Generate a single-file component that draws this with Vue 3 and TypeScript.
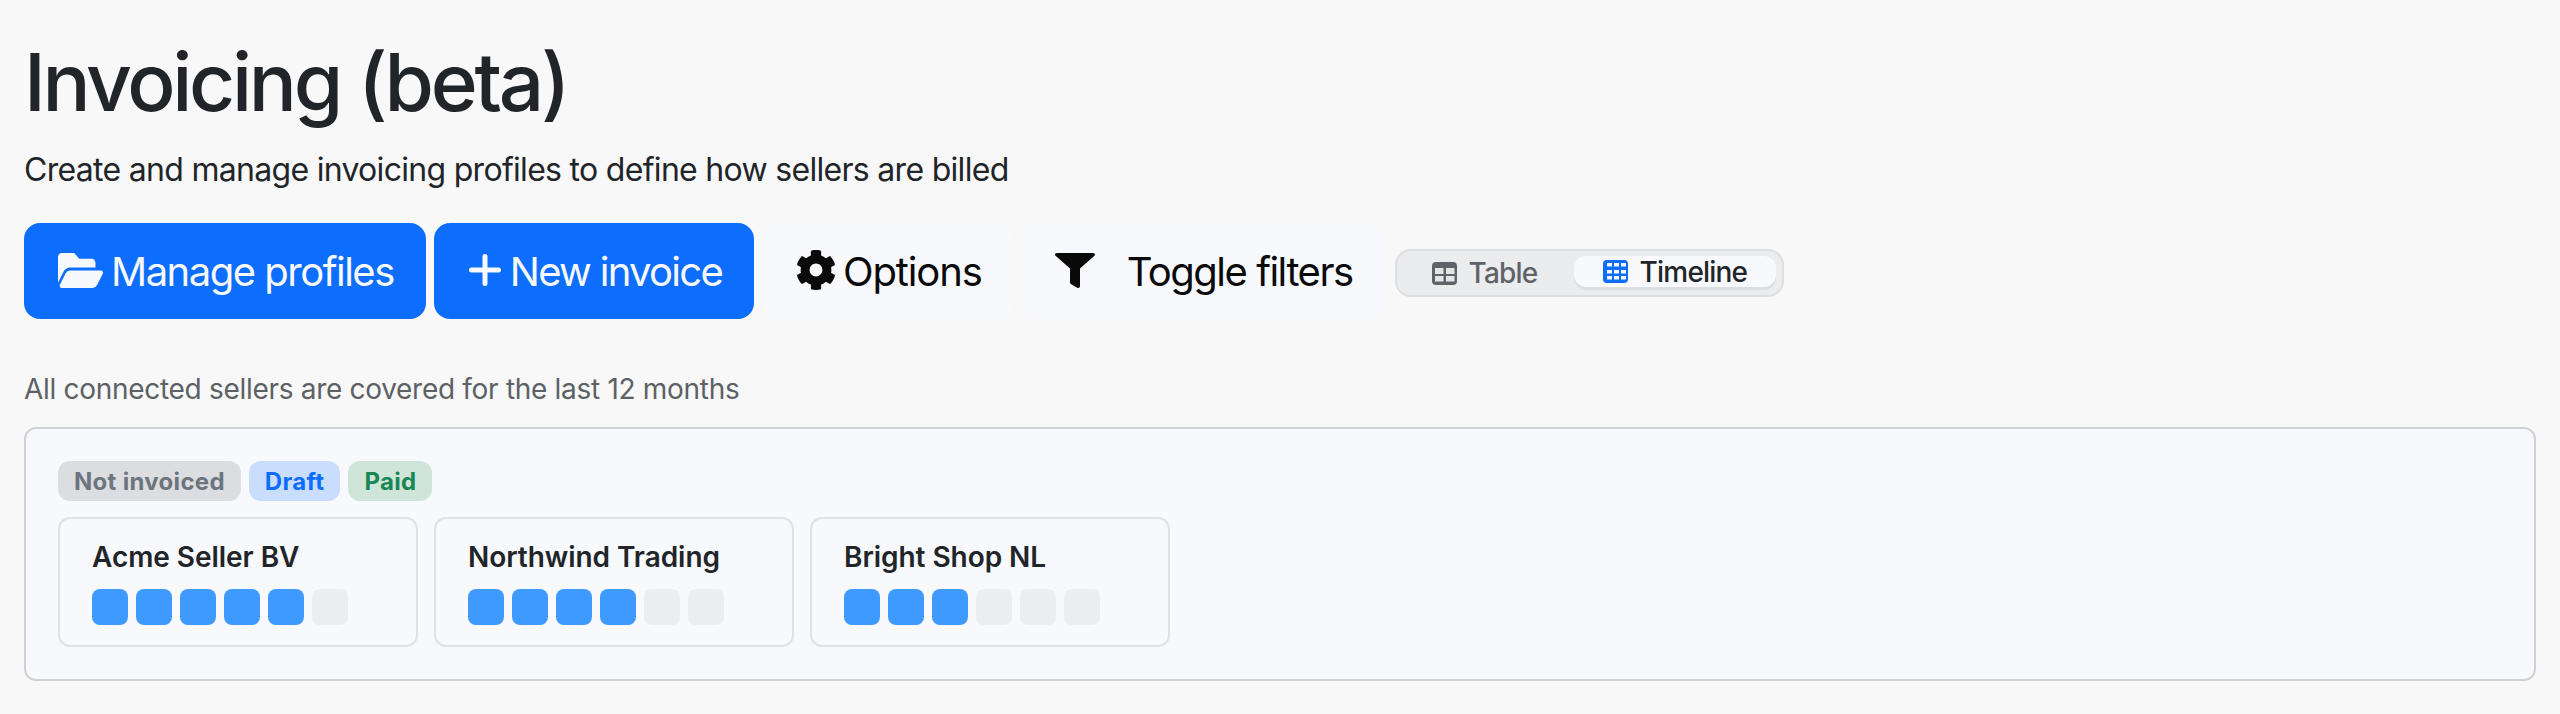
<script setup lang="ts">
interface Seller { name: string; paid: number }
const sellers: Seller[] = [
  { name: 'Acme Seller BV', paid: 5 },
  { name: 'Northwind Trading', paid: 4 },
  { name: 'Bright Shop NL', paid: 3 },
]
const months = [0, 1, 2, 3, 4, 5]
const gridCols = [4, 11, 18]
const gridRows = [3, 10, 16]
</script>

<template>
  <main class="page">
    <h1 class="title">Invoicing (beta)</h1>
    <p class="subtitle">Create and manage invoicing profiles to define how sellers are billed</p>
    <div class="toolbar">
      <button class="btn primary">
        <svg class="ic-folder" viewBox="0 64 576 384" preserveAspectRatio="none" fill="currentColor"><path d="M572.694 292.093L500.27 416.248A63.997 63.997 0 0 1 444.989 448H45.025c-18.523 0-30.064-20.093-20.731-36.093l72.424-124.155A64 64 0 0 1 152 256h399.964c18.523 0 30.064 20.093 20.73 36.093zM152 224h328v-48c0-26.51-21.49-48-48-48H272l-64-64H48C21.49 64 0 85.49 0 112v278.046l69.077-118.418C86.214 242.25 117.989 224 152 224z"/></svg>
        <span>Manage profiles</span>
      </button>
      <button class="btn primary tight">
        <svg class="ic-plus" viewBox="0 0 32 32" fill="none" stroke="currentColor" stroke-width="5" stroke-linecap="round"><path d="M16 2.500v27M2.500 16h27"/></svg>
        <span>New invoice</span>
      </button>
      <button class="btn light options">
        <svg class="ic-gear" viewBox="18 8 476 496" preserveAspectRatio="none" fill="currentColor"><path d="M487.4 315.7l-42.6-24.6c4.3-23.2 4.3-47 0-70.2l42.6-24.6c4.9-2.8 7.1-8.6 5.5-14-11.1-35.6-30-67.8-54.7-94.6-3.8-4.1-10-5.1-14.8-2.3L380.800 110c-17.900-15.400-38.500-27.300-60.800-35.100V25.800c0-5.600-3.900-10.500-9.400-11.700-36.700-8.200-74.300-7.800-109.200 0-5.500 1.200-9.400 6.100-9.400 11.700V75c-22.200 7.900-42.800 19.800-60.800 35.100L88.700 85.500c-4.900-2.800-11-1.900-14.800 2.300-24.700 26.700-43.600 58.900-54.700 94.600-1.700 5.400.6 11.200 5.500 14L67.300 221c-4.300 23.200-4.300 47 0 70.200l-42.600 24.600c-4.900 2.800-7.100 8.600-5.500 14 11.100 35.600 30 67.800 54.700 94.600 3.800 4.100 10 5.100 14.800 2.300l42.600-24.600c17.900 15.400 38.500 27.300 60.800 35.100v49.200c0 5.600 3.900 10.500 9.400 11.700 36.700 8.200 74.300 7.800 109.200 0 5.500-1.200 9.400-6.100 9.400-11.700v-49.200c22.200-7.900 42.800-19.800 60.800-35.100l42.600 24.600c4.900 2.800 11 1.900 14.800-2.300 24.700-26.700 43.600-58.900 54.700-94.600 1.500-5.500-.7-11.300-5.600-14.100zM256 336c-44.100 0-80-35.900-80-80s35.900-80 80-80 80 35.900 80 80-35.900 80-80 80z"/></svg>
        <span>Options</span>
      </button>
      <button class="btn light">
        <svg class="ic-funnel" viewBox="0 0 512 512" preserveAspectRatio="none" fill="currentColor"><path d="M487.976 0H24.028C2.71 0-8.047 25.866 7.058 40.971L192 225.941V432c0 7.831 3.821 15.17 10.237 19.662l80 55.98C298.02 518.69 320 507.493 320 487.98V225.941l184.947-184.97C520.021 25.896 509.338 0 487.976 0z"/></svg>
        <span>Toggle filters</span>
      </button>
      <div class="segment">
        <button class="seg-item">
          <svg class="seg-icon" viewBox="0 0 25 23"><rect width="25" height="23" rx="4" fill="currentColor"/><g fill="#e4e5e7"><rect x="3" y="6" width="8.500" height="6"/><rect x="14" y="6" width="8.500" height="6"/><rect x="3" y="14" width="8.500" height="5.500"/><rect x="14" y="14" width="8.500" height="5.500"/></g></svg>
          <span>Table</span>
        </button>
        <button class="seg-item active">
          <svg class="seg-icon blue" viewBox="0 0 25 23"><rect width="25" height="23" rx="4" fill="currentColor"/><g fill="#f8f9fd"><template v-for="r in gridRows" :key="r"><rect v-for="c in gridCols" :key="c" :x="c" :y="r" width="5" height="3.500"/></template></g></svg>
          <span>Timeline</span>
        </button>
      </div>
    </div>
    <p class="coverage">All connected sellers are covered for the last 12 months</p>
    <section class="panel">
      <div class="legend">
        <span class="badge grey">Not invoiced</span>
        <span class="badge blue">Draft</span>
        <span class="badge green">Paid</span>
      </div>
      <div class="cards">
        <article v-for="seller in sellers" :key="seller.name" class="card">
          <div class="card-title">{{ seller.name }}</div>
          <div class="squares">
            <span v-for="m in months" :key="m" class="square" :class="{ on: m < seller.paid }"></span>
          </div>
        </article>
      </div>
    </section>
  </main>
</template>

<style>
html, body { margin: 0; background: #f8f8f8; }
</style>

<style scoped>
.page {
  box-sizing: border-box;
  height: 714px;
  padding: 38px 24px 0;
  background: #f8f8f8;
  font-family: Inter, "Liberation Sans", sans-serif;
  color: #212529;
}
.title {
  margin: 0;
  font-size: 80px;
  line-height: 88px;
  font-weight: 500;
  letter-spacing: -3.3px;
}
.subtitle {
  margin: 20px 0 0;
  font-size: 32px;
  line-height: 48px;
  letter-spacing: -0.7px;
}
.toolbar {
  margin-top: 29px;
  display: flex;
  align-items: center;
  gap: 8px;
}
.btn {
  height: 96px;
  box-sizing: border-box;
  display: inline-flex;
  align-items: center;
  padding: 0 32px;
  border: 0;
  border-radius: 16px;
  font: inherit;
  font-size: 40px;
  letter-spacing: -1.5px;
}
.btn.tight { letter-spacing: -1.7px; }
.btn.options { letter-spacing: -1.15px; }
.primary { background: #0d6efd; color: #f8f9fd; }
.light { background: #f8f9fd; color: #0a0a0a; }
.ic-folder { width: 45px; height: 35px; margin: 0 8px 2px 2px; flex: none; }
.ic-plus { width: 32px; height: 32px; margin: 0 9px 2px 3px; flex: none; }
.ic-gear { width: 38px; height: 40px; margin: 0 8px 2px 3px; flex: none; }
.ic-funnel { width: 40px; height: 35px; margin: 0 32px 2px 1px; flex: none; }
.segment {
  margin: 4px 0 0 2px;
  box-sizing: border-box;
  width: 389px;
  height: 48px;
  display: flex;
  align-items: stretch;
  padding: 5px 6px;
  background: #ebecee;
  border: 2px solid #dcdee1;
  border-radius: 16px;
}
.seg-item {
  display: inline-flex;
  align-items: center;
  gap: 12px;
  border: 0;
  padding: 0 0 0 29px;
  background: transparent;
  color: #5f6368;
  font: inherit;
  font-size: 28px;
  font-weight: 500;
  letter-spacing: -0.8px;
  border-radius: 12px;
  flex: 1 1 auto;
}
.seg-item.active {
  background: #f8f9fd;
  color: #212529;
  box-shadow: 0 3px 0 #dcdee1;
  flex: 0 0 202px;
  box-sizing: border-box;
  margin-bottom: 3px;
}
.seg-icon { width: 25px; height: 23px; flex: none; }
.seg-icon.blue { color: #0d6efd; }
.coverage {
  margin: 52px 0 0;
  font-size: 28px;
  line-height: 36px;
  color: #5c6166;
  letter-spacing: -0.3px;
}
.panel {
  margin-top: 20px;
  box-sizing: border-box;
  padding: 32px;
  background: #f8f9fd;
  border: 2px solid #cfd1d4;
  border-radius: 12px;
}
.legend { display: flex; gap: 8px; }
.badge {
  height: 40px;
  display: inline-flex;
  align-items: center;
  padding: 0 16px;
  border-radius: 12px;
  font-size: 24px;
  font-weight: 700;
  letter-spacing: 0.3px;
}
.badge.grey { background: #dcdde0; color: #6c757d; }
.badge.blue { background: #c9defe; color: #0d6efd; }
.badge.green { background: #d0e5da; color: #198754; }
.cards { margin-top: 16px; display: flex; gap: 16px; }
.card {
  box-sizing: border-box;
  width: 360px;
  height: 130px;
  padding: 20px 32px;
  border: 2px solid #dfe1e4;
  border-radius: 12px;
}
.card-title {
  font-size: 28px;
  line-height: 36px;
  font-weight: 600;
  letter-spacing: -0.05px;
}
.squares { margin-top: 14px; display: flex; gap: 8px; }
.square {
  width: 36px;
  height: 36px;
  border-radius: 8px;
  background: #ecedef;
}
.square.on { background: #3f9aff; }
</style>
